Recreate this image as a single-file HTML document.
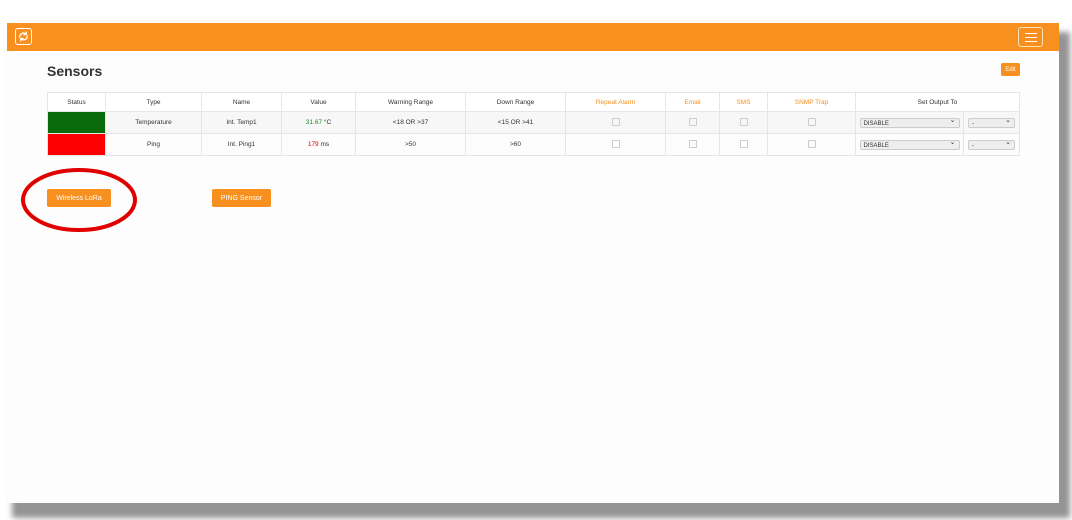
<!DOCTYPE html>
<html><head><style>
body{margin:0;width:1072px;height:520px;background:#fff;position:relative;overflow:hidden;font-family:"Liberation Sans",sans-serif;}
.shadow{position:absolute;left:12px;top:32px;width:1058px;height:486px;background:#949494;filter:blur(3px);}
.page{position:absolute;left:7px;top:23px;width:1052px;height:480px;background:#fdfdfd;}
.hdr{position:absolute;left:0;top:0;width:1052px;height:28px;background:#f7901e;}
.logo{position:absolute;left:8px;top:5px;width:17px;height:17px;border:1px solid #fff;border-radius:3px;box-sizing:border-box;}
.menu{position:absolute;right:16px;top:4px;width:25px;height:20px;border:1px solid #fde0b8;border-radius:3px;box-sizing:border-box;}
.menu i{position:absolute;left:6px;width:12px;height:1px;background:#fff;}
h1{position:absolute;left:40px;top:40px;margin:0;font-size:14px;font-weight:bold;color:#333;}
.edit{position:absolute;left:994px;top:40px;width:19px;height:13px;background:#f7901e;color:#fff;font-size:6px;display:flex;align-items:center;justify-content:center;border-radius:2px;}
table{position:absolute;left:40px;top:69px;border-collapse:collapse;font-size:6.5px;color:#333;}
td{border:1px solid #e6e6e6;text-align:center;padding:0;}
tr.h td{height:18px;background:#fff;}
tr.r td{height:21px;}
tr.r1 td{background:#f7f7f7;}
.o{color:#f7901e;}
.cb{display:inline-block;width:6px;height:6px;border:1px solid #ccc;border-radius:1px;}
.sel{display:inline-block;height:10px;border:1px solid #ccc;background:#eee;border-radius:2px;font-size:6px;text-align:left;line-height:10px;padding-left:3px;box-sizing:border-box;position:relative;}
.sel:after{content:"⌄";position:absolute;right:3px;top:-3px;font-size:7px;}
.btn{position:absolute;top:166px;height:18px;background:#f7901e;color:#fff;font-size:7px;display:flex;align-items:center;justify-content:center;border-radius:2px;}
</style></head><body>
<div class="shadow"></div>
<div class="page">
<div class="hdr"><div class="logo"><svg width="15" height="15" viewBox="0 0 14 14"><path d="M3.5 8a3.5 3.5 0 0 1 6-3M10.5 6a3.5 3.5 0 0 1-6 3" stroke="#fff" fill="none" stroke-width="1.2"/><path d="M9.5 2.5v2.6h-2.6M4.5 11.5V8.9h2.6" stroke="#fff" fill="none" stroke-width="1.2"/></svg></div>
<div class="menu"><i style="top:5px"></i><i style="top:9px"></i><i style="top:13px"></i></div></div>
<h1>Sensors</h1>
<div class="edit">Edit</div>
<table>
<tr class="h"><td style="width:57px">Status</td><td style="width:95px">Type</td><td style="width:79px">Name</td><td style="width:73px">Value</td><td style="width:109px">Warning Range</td><td style="width:99px">Down Range</td><td class="o" style="width:99px">Repeat Alarm</td><td class="o" style="width:53px">Email</td><td class="o" style="width:47px">SMS</td><td class="o" style="width:87px">SNMP Trap</td><td colspan="2" style="width:163px">Set Output To</td></tr>
<tr class="r r1"><td style="background:#0b6a0b"></td><td>Temperature</td><td>Int. Temp1</td><td><span style="color:#1e8a1e">31.67</span> °C</td><td>&lt;18 OR &gt;37</td><td>&lt;15 OR &gt;41</td><td><span class="cb"></span></td><td><span class="cb"></span></td><td><span class="cb"></span></td><td><span class="cb"></span></td><td style="width:107px"><span class="sel" style="width:100px">DISABLE</span></td><td style="width:55px"><span class="sel" style="width:47px">-</span></td></tr>
<tr class="r"><td style="background:#fe0000"></td><td>Ping</td><td>Int. Ping1</td><td><span style="color:#d40000">179</span> ms</td><td>&gt;50</td><td>&gt;60</td><td><span class="cb"></span></td><td><span class="cb"></span></td><td><span class="cb"></span></td><td><span class="cb"></span></td><td><span class="sel" style="width:100px">DISABLE</span></td><td><span class="sel" style="width:47px">-</span></td></tr>
</table>
<div class="btn" style="left:40px;width:64px">Wireless LoRa</div>
<div class="btn" style="left:205px;width:59px">PING Sensor</div>
<svg style="position:absolute;left:0;top:0" width="200" height="230"><ellipse cx="72" cy="177" rx="56" ry="30" fill="none" stroke="#e00000" stroke-width="4"/></svg>
</div>
</body></html>
